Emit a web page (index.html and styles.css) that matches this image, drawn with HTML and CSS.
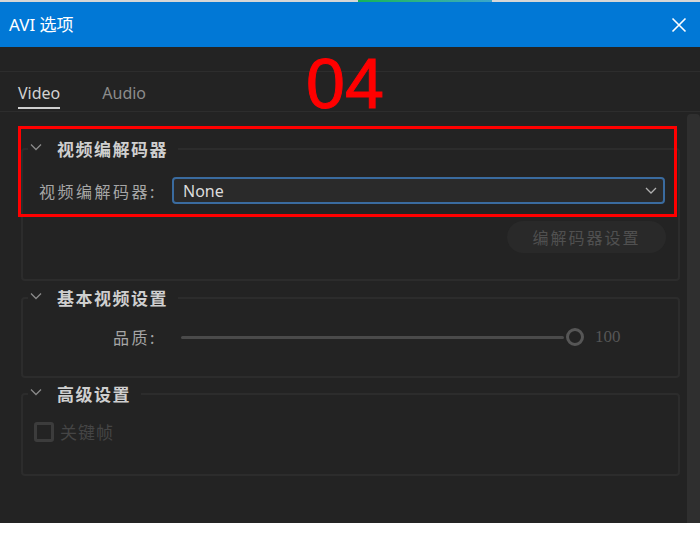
FILE: index.html
```html
<!DOCTYPE html>
<html lang="zh-CN">
<head>
<meta charset="utf-8">
<title>AVI 选项</title>
<link rel="stylesheet" href="styles.css">
</head>
<body>
<div class="window">
  <div class="top-strip"><div class="progress"></div></div>
  <div class="titlebar">
    <span class="title">AVI 选项</span>
    <svg class="close" width="16" height="16" viewBox="0 0 16 16"><path d="M1.5 1.5 L14.5 14.5 M14.5 1.5 L1.5 14.5" stroke="#fff" stroke-width="1.6" fill="none"/></svg>
  </div>
  <div class="main">
    <div class="tabs">
      <div class="tab active">Video</div>
      <div class="tab">Audio</div>
    </div>
    <div class="content">
      <div class="panel">
        <fieldset class="group g1">
          <legend class="legend">
            <svg class="chev" width="12" height="8" viewBox="0 0 12 8"><path d="M1 1.5 L6 6.5 L11 1.5" stroke="#8a8a8a" stroke-width="1.3" fill="none"/></svg>
            <span class="gtitle">视频编解码器</span>
          </legend>
          <div class="row">
            <span class="label">视频编解码器:</span>
            <div class="select">
              <span class="sel-text">None</span>
              <svg width="12" height="7" viewBox="0 0 12 7"><path d="M1 1 L6 6 L11 1" stroke="#b0b0b0" stroke-width="1.3" fill="none"/></svg>
            </div>
          </div>
          <div class="btn-row">
            <div class="btn">编解码器设置</div>
          </div>
        </fieldset>
        <fieldset class="group g2">
          <legend class="legend">
            <svg class="chev" width="12" height="8" viewBox="0 0 12 8"><path d="M1 1.5 L6 6.5 L11 1.5" stroke="#8a8a8a" stroke-width="1.3" fill="none"/></svg>
            <span class="gtitle">基本视频设置</span>
          </legend>
          <div class="row slider-row">
            <span class="label">品质:</span>
            <div class="track"></div>
            <div class="knob"></div>
            <span class="value">100</span>
          </div>
        </fieldset>
        <fieldset class="group g3">
          <legend class="legend">
            <svg class="chev" width="12" height="8" viewBox="0 0 12 8"><path d="M1 1.5 L6 6.5 L11 1.5" stroke="#8a8a8a" stroke-width="1.3" fill="none"/></svg>
            <span class="gtitle">高级设置</span>
          </legend>
          <div class="check-row">
            <span class="checkbox"></span>
            <span class="check-label">关键帧</span>
          </div>
        </fieldset>
      </div>
      <div class="scrollbar"></div>
    </div>
  </div>
</div>
<div class="annot-box"></div>
<div class="annot-num">04</div>
</body>
</html>
```
FILE: styles.css
```css
html, body {
  margin: 0;
  padding: 0;
}
body {
  width: 700px;
  height: 543px;
  background: #ffffff;
  position: relative;
  overflow: hidden;
  font-family: "Noto Sans", "Noto Sans CJK SC", sans-serif;
}
.window {
  width: 700px;
}
.top-strip {
  height: 2px;
  background: #d6d6d6;
}
.progress {
  margin-left: 358px;
  width: 134px;
  height: 2px;
  background: linear-gradient(90deg, #16b35a, #2fb38a 50%, #3aa6cc);
}
.titlebar {
  height: 45px;
  background: #0178d6;
  display: flex;
  align-items: center;
  justify-content: space-between;
  padding: 0 13px 0 9px;
}
.title {
  color: #ffffff;
  font-size: 17px;
  font-family: "Noto Sans", "Noto Sans CJK SC", sans-serif;
  line-height: 22px;
}
.close {
  display: block;
}
.main {
  height: 476px;
  background: #232323;
  padding-top: 24px;
  box-sizing: border-box;
  display: flex;
  flex-direction: column;
}
.tabs {
  border-top: 1px solid #2d2d2d;
  border-bottom: 1px solid #2d2d2d;
  display: flex;
  gap: 42px;
  padding-left: 18px;
}
.tab {
  font-size: 16px;
  line-height: 22px;
  padding-top: 10px;
  padding-bottom: 3px;
  border-bottom: 2px solid transparent;
  margin-bottom: 2px;
  color: #8c8c8c;
}
.tab.active {
  color: #d2d2d2;
  border-bottom-color: #cfcfcf;
}
.content {
  flex: 1;
  display: flex;
}
.panel {
  flex: 1;
  padding: 25px 7px 0 21px;
  display: flex;
  flex-direction: column;
}
.scrollbar {
  width: 13px;
  margin-top: 2px;
  background: #2f2f2f;
  border-radius: 4px 4px 0 0;
}
.group {
  border: 2px solid #2c2c2c;
  border-radius: 4px;
  margin: 0;
  padding: 0;
  min-width: 0;
}
.g1 { padding-bottom: 26px; }
.g2 { margin-top: 5px; padding-bottom: 27px; }
.g3 { margin-top: 4px; padding-bottom: 32px; }
.legend {
  display: flex;
  align-items: center;
  margin-left: 5px;
  padding: 0 10px 0 2px;
  height: 24px;
}
.chev {
  display: block;
  margin-right: 15px;
  margin-top: -4px;
}
.gtitle {
  font-family: "Noto Sans CJK SC", sans-serif;
  font-weight: bold;
  font-size: 17px;
  letter-spacing: 1.5px;
  color: #cfcfcf;
  line-height: 24px;
}
.row {
  display: flex;
  align-items: center;
  margin-top: 16px;
  padding-left: 14px;
}
.label {
  width: 120px;
  text-align: right;
  font-family: "Noto Sans CJK SC", sans-serif;
  font-size: 16px;
  letter-spacing: 2.5px;
  color: #a6a6a6;
  white-space: nowrap;
}
.select {
  margin-left: 15px;
  margin-right: 13px;
  flex: 1;
  height: 27px;
  box-sizing: border-box;
  border: 2px solid #3a6b9f;
  border-radius: 4px;
  background: #2a2a2a;
  display: flex;
  align-items: center;
  justify-content: space-between;
  padding: 0 6px 0 9px;
}
.sel-text {
  font-size: 16px;
  color: #dcdcdc;
  line-height: 20px;
}
.btn-row {
  display: flex;
  justify-content: flex-end;
  margin-top: 17px;
  padding-right: 12px;
}
.btn {
  width: 159px;
  height: 32px;
  border-radius: 16px;
  background: #292929;
  color: #505050;
  font-family: "Noto Sans CJK SC", sans-serif;
  font-size: 16px;
  letter-spacing: 2px;
  display: flex;
  align-items: center;
  justify-content: center;
}
.slider-row {
  margin-top: 15px;
  height: 24px;
}
.track {
  margin-left: 24px;
  flex: 1;
  height: 3px;
  background: #4a4a4a;
  border-radius: 2px;
}
.knob {
  margin-left: 2px;
  width: 18px;
  height: 18px;
  box-sizing: border-box;
  border: 3px solid #565656;
  border-radius: 50%;
}
.value {
  margin-left: 11px;
  width: 30px;
  margin-right: 53px;
  font-family: "Liberation Serif", "DejaVu Serif", serif;
  font-size: 17px;
  color: #565656;
}
.check-row {
  display: flex;
  align-items: center;
  margin-top: 15px;
  padding-left: 11px;
  height: 21px;
}
.checkbox {
  width: 20px;
  height: 20px;
  box-sizing: border-box;
  border: 3px solid #3c3c3c;
  border-radius: 3px;
}
.check-label {
  margin-left: 6px;
  font-family: "Noto Sans CJK SC", sans-serif;
  font-size: 17px;
  color: #454545;
  letter-spacing: 1px;
}
.annot-box {
  position: absolute;
  left: 18px;
  top: 126px;
  width: 659px;
  height: 91px;
  box-sizing: border-box;
  border: 3px solid #ff0000;
}
.annot-num {
  position: absolute;
  left: 306px;
  top: 44px;
  font-family: "Liberation Sans", Arial, sans-serif;
  font-size: 70px;
  line-height: 80px;
  color: #ff0000;
  -webkit-text-stroke: 1px #ff0000;
}
```
